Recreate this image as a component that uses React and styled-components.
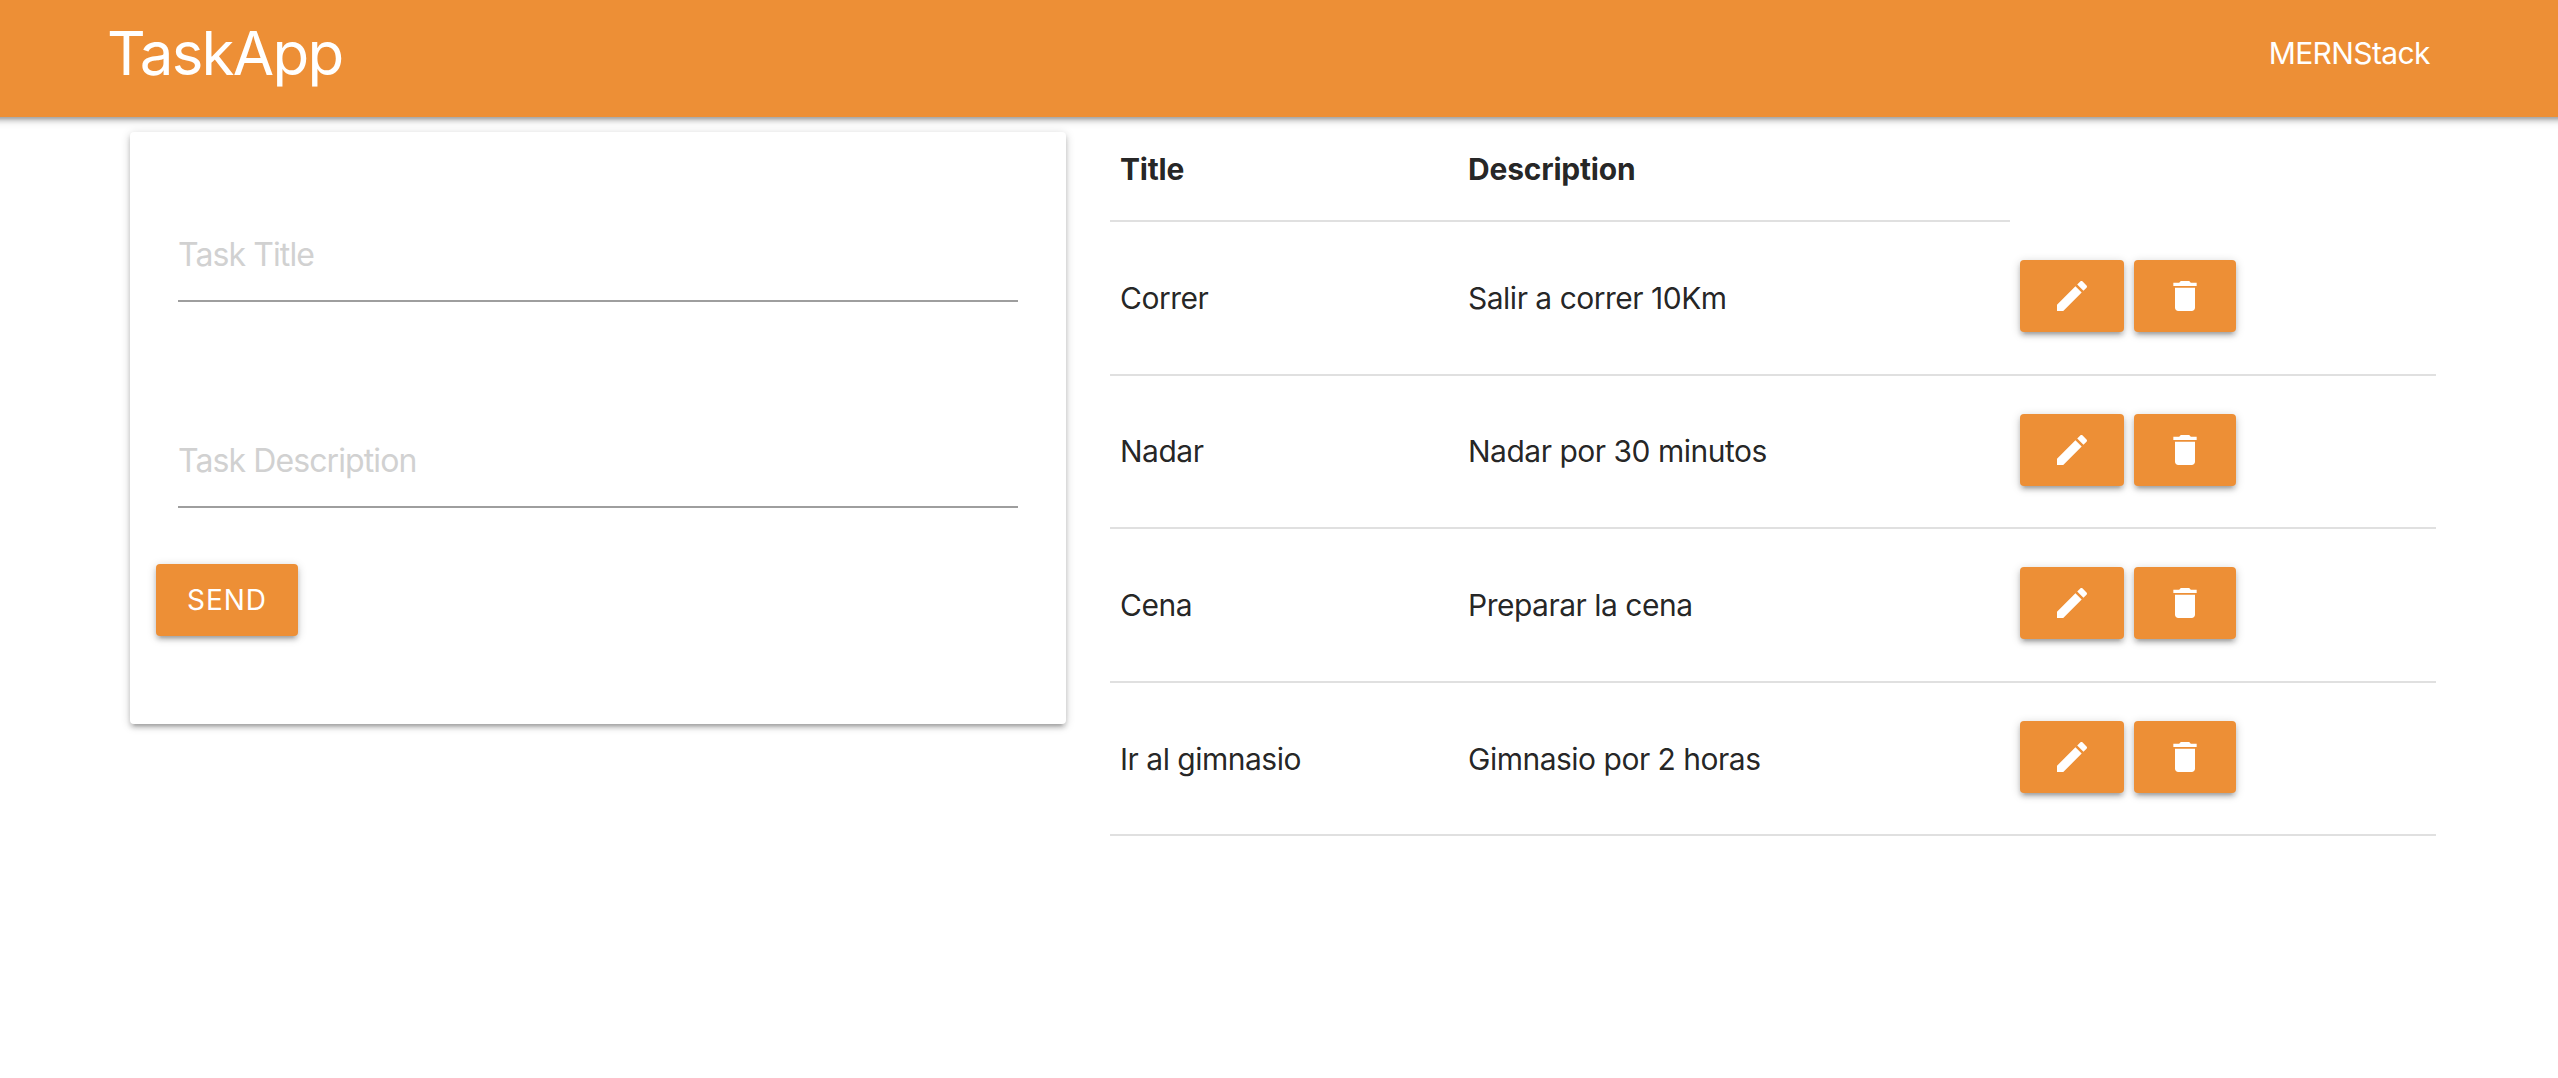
import React from 'react'
import styled, { createGlobalStyle } from 'styled-components'

const orange = '#ed8f36'
const depth1 = '0 4px 4px 0 rgba(0,0,0,0.14), 0 6px 2px -4px rgba(0,0,0,0.12), 0 2px 10px 0 rgba(0,0,0,0.2)'

const GlobalStyle = createGlobalStyle`
  html, body {
    margin: 0;
    padding: 0;
    background: #fff;
    font-family: Inter, "Liberation Sans", sans-serif;
    color: rgba(0, 0, 0, 0.87);
    overflow-x: hidden;
  }
  * {
    box-sizing: border-box;
  }
`

const Navbar = styled.nav`
  height: 117px;
  margin: 0 -12px;
  padding: 0 140px 0 119px;
  background-color: ${orange};
  box-shadow: ${depth1};
  display: flex;
  align-items: center;
  justify-content: space-between;
  color: #fff;
  position: relative;
`

const Brand = styled.a`
  font-size: 60px;
  line-height: 104px;
  margin-top: -12px;
  letter-spacing: -1.7px;
`

const NavLink = styled.a`
  font-size: 30px;
  line-height: 40px;
  margin-top: -12px;
  letter-spacing: -0.6px;
`

const Main = styled.main`
  display: flex;
  align-items: flex-start;
  gap: 44px;
  padding-left: 130px;
`

const Card = styled.div`
  width: 936px;
  margin-top: 15px;
  padding: 76px 26px 88px;
  background: #fff;
  border-radius: 4px;
  box-shadow: ${depth1};
`

const Field = styled.div`
  padding: 0 22px 0;
  margin-bottom: 112px;

  &:last-of-type {
    margin-bottom: 56px;
  }
`

const Input = styled.input`
  display: block;
  width: 100%;
  height: 94px;
  padding: 0;
  border: 0;
  border-bottom: 2px solid #9e9e9e;
  outline: none;
  background: transparent;
  font-family: inherit;
  font-size: 32px;
  letter-spacing: -0.9px;

  &::placeholder {
    color: #d1d1d1;
    opacity: 1;
  }
`

const Button = styled.button`
  display: inline-flex;
  align-items: center;
  justify-content: center;
  height: 72px;
  width: ${props => props.$width}px;
  padding: 0;
  border: 0;
  border-radius: 4px;
  background-color: ${orange};
  color: #fff;
  font-family: inherit;
  font-size: 28px;
  letter-spacing: 1px;
  text-transform: uppercase;
  box-shadow: ${depth1};
`

const Table = styled.table`
  width: 1326px;
  table-layout: fixed;
  border-collapse: collapse;
  font-size: 30px;
  letter-spacing: -0.5px;
`

const Th = styled.th`
  height: 104px;
  padding: 0 10px;
  text-align: left;
  font-weight: 700;
  letter-spacing: -0.2px;
  border-bottom: 2px solid rgba(0, 0, 0, 0.12);
`

const Row = styled.tr`
  border-bottom: 2px solid rgba(0, 0, 0, 0.12);
`

const Td = styled.td`
  height: 153.6px;
  padding: 0 10px;
  vertical-align: middle;
`

const Actions = styled.div`
  display: flex;
  gap: 10px;
  margin-top: -3px;
`

const Icon = styled.svg`
  width: 40px;
  height: 40px;
  fill: #fff;
`

const EditIcon = () => (
  <Icon viewBox="0 0 24 24">
    <path d="M3 17.25V21h3.75L17.81 9.94l-3.75-3.75L3 17.25zM20.71 7.04c.39-.39.39-1.02 0-1.41l-2.34-2.34c-.39-.39-1.02-.39-1.41 0l-1.83 1.83 3.75 3.75 1.83-1.83z" />
  </Icon>
)

const DeleteIcon = () => (
  <Icon viewBox="0 0 24 24">
    <path d="M6 19c0 1.1.9 2 2 2h8c1.1 0 2-.9 2-2V7H6v12zM19 4h-3.5l-1-1h-5l-1 1H5v2h14V4z" />
  </Icon>
)

const tasks = [
  { title: 'Correr', description: 'Salir a correr 10Km' },
  { title: 'Nadar', description: 'Nadar por 30 minutos' },
  { title: 'Cena', description: 'Preparar la cena' },
  { title: 'Ir al gimnasio', description: 'Gimnasio por 2 horas' },
]

const App = () => (
  <>
    <GlobalStyle />
    <Navbar>
      <Brand>TaskApp</Brand>
      <NavLink>MERNStack</NavLink>
    </Navbar>
    <Main>
      <Card>
        <form>
          <Field>
            <Input type="text" placeholder="Task Title" />
          </Field>
          <Field>
            <Input type="text" placeholder="Task Description" />
          </Field>
          <Button type="button" $width={142}>Send</Button>
        </form>
      </Card>
      <Table>
        <colgroup>
          <col style={{ width: 348 }} />
          <col style={{ width: 552 }} />
          <col />
        </colgroup>
        <thead>
          <tr>
            <Th>Title</Th>
            <Th>Description</Th>
          </tr>
        </thead>
        <tbody>
          {tasks.map(task => (
            <Row key={task.title}>
              <Td>{task.title}</Td>
              <Td>{task.description}</Td>
              <Td>
                <Actions>
                  <Button type="button" $width={104}><EditIcon /></Button>
                  <Button type="button" $width={102}><DeleteIcon /></Button>
                </Actions>
              </Td>
            </Row>
          ))}
        </tbody>
      </Table>
    </Main>
  </>
)

export default App
